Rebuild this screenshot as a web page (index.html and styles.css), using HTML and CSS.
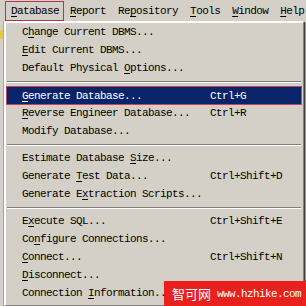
FILE: index.html
```html
<!DOCTYPE html>
<html lang="en">
<head>
    <meta charset="UTF-8">
    <title>Database Menu</title>
    <link rel="stylesheet" href="styles.css">
</head>
<body>

    <div class="screen">
        <div class="menubar">
            <span class="menu-title active"><u>D</u>atabase</span>
            <span class="menu-title"><u>R</u>eport</span>
            <span class="menu-title">Re<u>p</u>ository</span>
            <span class="menu-title"><u>T</u>ools</span>
            <span class="menu-title"><u>W</u>indow</span>
            <span class="menu-title"><u>H</u>elp</span>
        </div>

        <div class="workspace">
            <div class="side-strip">
                <span class="folder-icon"></span>
            </div>

            <div class="dropdown">
                <div class="item"><span>C<u>h</u>ange Current DBMS...</span><span></span></div>
                <div class="item"><span><u>E</u>dit Current DBMS...</span><span></span></div>
                <div class="item"><span>Default Physical <u>O</u>ptions...</span><span></span></div>
                <div class="sep"></div>
                <div class="item selected"><span><u>G</u>enerate Database...</span><span>Ctrl+G</span></div>
                <div class="item"><span><u>R</u>everse Engineer Database...</span><span>Ctrl+R</span></div>
                <div class="item"><span>Modify Database...</span><span></span></div>
                <div class="sep"></div>
                <div class="item"><span>Estimate Database <u>S</u>ize...</span><span></span></div>
                <div class="item"><span>Generate <u>T</u>est Data...</span><span>Ctrl+Shift+D</span></div>
                <div class="item"><span>Generate E<u>x</u>traction Scripts...</span><span></span></div>
                <div class="sep"></div>
                <div class="item"><span>E<u>x</u>ecute SQL...</span><span>Ctrl+Shift+E</span></div>
                <div class="item"><span>Co<u>n</u>figure Connections...</span><span></span></div>
                <div class="item"><span><u>C</u>onnect...</span><span>Ctrl+Shift+N</span></div>
                <div class="item"><span><u>D</u>isconnect...</span><span></span></div>
                <div class="item"><span>Connection <u>I</u>nformation...</span><span></span></div>
            </div>
        </div>

        <div class="watermark">
            <span class="wm-cn">智可网</span>
            <span class="wm-url">www.hzhike.com</span>
        </div>
    </div>

</body>
</html>
```

FILE: styles.css
```css
body {
    margin: 0;
    background-color: #d4d0c8;
    color: #000;
    font-family: "Liberation Mono", monospace;
    font-size: 11px;
    letter-spacing: -0.6px;
}

u {
    text-decoration-thickness: 1px;
    text-underline-offset: 2px;
}

.screen {
    position: relative;
    width: 306px;
    height: 306px;
    overflow: hidden;
    background-color: #d4d0c8;
}

.menubar {
    display: flex;
    height: 21px;
    padding-left: 5px;
    box-sizing: border-box;
    padding-top: 1px;
    white-space: nowrap;
}

.menu-title {
    display: flex;
    align-items: center;
    height: 18px;
    padding: 0 6px;
    border-top: 1px solid transparent;
    border-bottom: 1px solid transparent;
    flex-shrink: 0;
}

.menu-title.active {
    border: 1px solid #b3374a;
    padding: 0 4px 0 5px;
}

.menu-title:last-child {
    padding-right: 0;
}

.workspace {
    display: flex;
}

.side-strip {
    width: 4px;
    height: 285px;
    border-right: 1px solid #a8a49c;
    box-sizing: border-box;
    padding-top: 9px;
}

.folder-icon {
    display: block;
    width: 3px;
    height: 9px;
    background-color: #e8c84a;
}

.dropdown {
    width: 300px;
    box-sizing: border-box;
    border-top: 2px solid #fff;
    border-left: 2px solid #fff;
    border-right: 1px solid #808080;
    border-bottom: 1px solid #808080;
    box-shadow: 1px 1px 0 #404040, 2px 2px 1px rgba(0, 0, 0, 0.25);
    padding-right: 1px;
}

.item {
    display: grid;
    grid-template-columns: 188px 1fr;
    height: 18px;
    align-items: center;
    padding-left: 16px;
    box-sizing: border-box;
    white-space: nowrap;
}

.item.selected {
    background-color: #0a246a;
    color: #fff;
    outline: 1px solid #c8405e;
    outline-offset: -1px;
    height: 19px;
    margin-bottom: -1px;
}

.sep {
    margin: 4px 1px 3px 1px;
    border-top: 1px solid #808080;
    border-bottom: 1px solid #fff;
}

.watermark {
    position: absolute;
    left: 164px;
    top: 281px;
    width: 142px;
    height: 25px;
    background-color: #e8201e;
    color: #fff;
    display: flex;
    align-items: center;
    padding-left: 8px;
    box-sizing: border-box;
    white-space: nowrap;
}

.wm-cn {
    font-family: "Noto Sans CJK SC", sans-serif;
    font-size: 13px;
    letter-spacing: 0;
    margin-right: 6px;
    flex-shrink: 0;
}

.wm-url {
    font-size: 11px;
    flex-shrink: 0;
}
```
